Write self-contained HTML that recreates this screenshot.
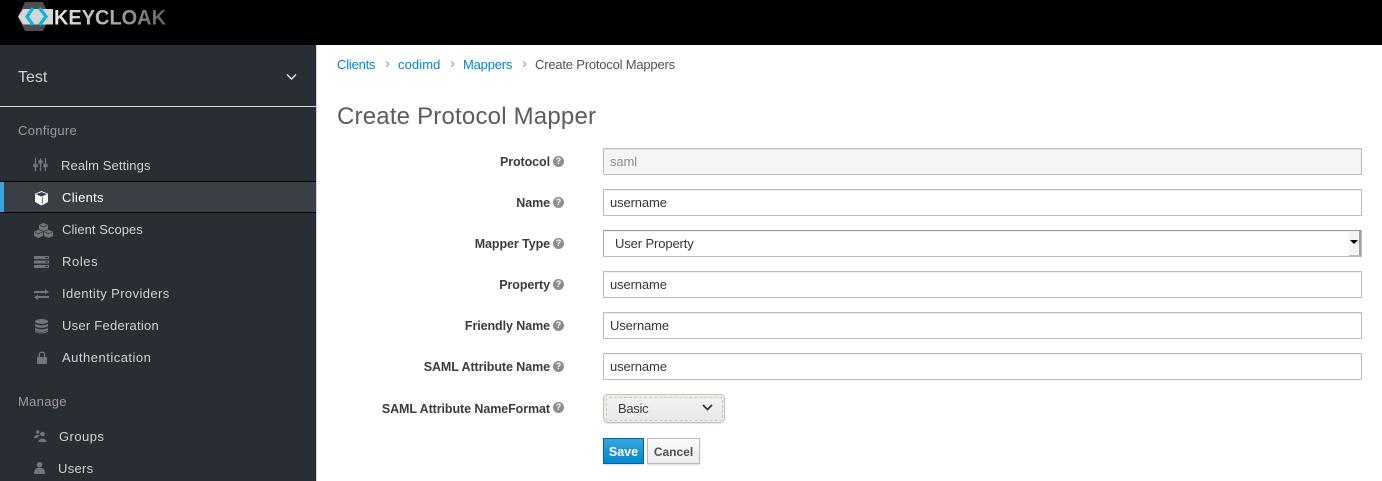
<!DOCTYPE html>
<html><head><meta charset="utf-8"><style>
html,body{margin:0;padding:0;width:1382px;height:481px;overflow:hidden;background:#fff;font-family:"Liberation Sans",sans-serif;font-size:13px;color:#363636}
.a{position:absolute;white-space:nowrap;line-height:18px}
#hd{position:absolute;left:0;top:0;width:1382px;height:45px;background:#000}
#sb{position:absolute;left:0;top:45px;width:316px;height:436px;background:#292e34;border-right:1px solid #d1d1d1}
.n{color:#d1d1d1}
.s{color:#9c9c9c;letter-spacing:.3px}
.l{right:832px;font-weight:bold;font-size:12.5px;color:#3c3c3c;letter-spacing:-.08px;text-align:right}
.q{position:absolute;left:553px;width:11px;height:11px;border-radius:50%;background:#8b8d8f;color:#fff;font:bold 9px/11px "Liberation Sans",sans-serif;text-align:center}
.i{position:absolute;left:603px;width:757px;height:25px;border:1px solid #bbb;background:#fff;line-height:25px;text-indent:6px;letter-spacing:-.12px;color:#363636;border-radius:1px;box-shadow:inset 0 1px 1px rgba(3,3,3,.06)}
.b{color:#0088ce;letter-spacing:-.2px}
.c{color:#9c9c9c;font-size:15px}
svg{position:absolute;overflow:visible}
</style></head><body>
<div id="hd"></div>
<svg style="left:0;top:0" width="180" height="45">
<defs><linearGradient id="g" x1="0" x2="1" y1="0" y2="0"><stop offset="0" stop-color="#e8e8e8"/><stop offset=".45" stop-color="#b5b5b5"/><stop offset="1" stop-color="#5f5f5f"/></linearGradient></defs>
<polygon points="25,31 43,31 50,17 43,2 25,2 18,17" fill="#4d4d4d"/>
<polygon points="18,16.5 23,9 53,9 53,24.5 23,24.5" fill="#d6d6d6"/>
<path d="M33,8 L27,16.5 L33,25 M39.5,8 L46,16.5 L39.5,25" fill="none" stroke="#00b8e3" stroke-width="3.2"/>
<text x="54" y="24.5" font-family="Liberation Sans" font-weight="bold" font-size="21" fill="url(#g)" textLength="112" lengthAdjust="spacingAndGlyphs">KEYCLOAK</text>
</svg>
<div id="sb"></div>
<div class="a" style="left:18px;top:68px;font-size:16px;line-height:20px;color:#d1d1d1;letter-spacing:0">Test</div>
<svg style="left:286px;top:73px" width="11" height="8"><path d="M1,1.5 L5.5,6 L10,1.5" fill="none" stroke="#e8e8e8" stroke-width="1.4"/></svg>
<div style="position:absolute;left:0;top:106px;width:316px;height:1px;background:#d8d8d8"></div>
<div class="a s" style="left:18px;top:122px">Configure</div>
<div class="a n" style="left:61px;top:157px;letter-spacing:.1px">Realm Settings</div>
<div style="position:absolute;left:0;top:181px;width:316px;height:32px;box-sizing:border-box;background:#393f44;border-top:1px solid #030303;border-bottom:1px solid #030303"></div>
<div style="position:absolute;left:0;top:182px;width:4px;height:30px;background:#39a5dc"></div>
<div class="a" style="left:62px;top:189px;color:#fff;letter-spacing:.3px">Clients</div>
<div class="a n" style="left:62px;top:221px;letter-spacing:.05px">Client Scopes</div>
<div class="a n" style="left:62px;top:253px;letter-spacing:.6px">Roles</div>
<div class="a n" style="left:62px;top:285px;letter-spacing:.4px">Identity Providers</div>
<div class="a n" style="left:62px;top:317px;letter-spacing:.25px">User Federation</div>
<div class="a n" style="left:62px;top:349px;letter-spacing:.5px">Authentication</div>
<div class="a s" style="left:18px;top:393px">Manage</div>
<div class="a n" style="left:59px;top:428px;letter-spacing:.45px">Groups</div>
<div class="a n" style="left:58px;top:460px;letter-spacing:.3px">Users</div>
<!-- sidebar icons -->
<svg style="left:34px;top:158px" width="14" height="14"><g stroke="#72767b" fill="#72767b" stroke-width="1.3"><path d="M1.5,0V13M6.5,0V13M11.5,0V13" fill="none"/><rect x="0" y="6.5" width="3" height="2"/><rect x="5" y="3" width="3" height="2"/><rect x="10" y="6.5" width="3" height="2"/></g></svg>
<svg style="left:34px;top:191px" width="15" height="15"><path d="M7.5,0 L14,2.8 V11 L7.5,14.5 L1,11 V2.8 Z" fill="#fff"/><path d="M3,3.2 L7.5,1.5 L12,3.2 L7.5,5.2 Z M8.3,6.2 V12.4" fill="#393f44" stroke="#393f44" stroke-width=".8"/></svg>
<svg style="left:34px;top:223px" width="19" height="15" fill="#72767b"><path d="M9.5,0 L14,2 V6.2 L9.5,8 L5,6.2 V2 Z"/><path d="M4.5,6.8 L9,8.8 V13 L4.5,15 L0,13 V8.8 Z"/><path d="M14.5,6.8 L19,8.8 V13 L14.5,15 L10,13 V8.8 Z"/><path d="M5.8,2.4 L9.5,4 L13.2,2.4 M1,9.2 L4.5,10.8 L8,9.2 M11,9.2 L14.5,10.8 L18,9.2" fill="none" stroke="#292e34" stroke-width=".7"/></svg>
<svg style="left:34px;top:256px" width="15" height="12" fill="#72767b"><rect width="15" height="3"/><rect y="4.5" width="15" height="3"/><rect y="9" width="15" height="3"/><g fill="#292e34"><rect x="11" y="1" width="3" height="1"/><rect x="11" y="5.5" width="3" height="1"/><rect x="11" y="10" width="3" height="1"/></g></svg>
<svg style="left:34px;top:289px" width="15" height="11" fill="#72767b"><path d="M0,2 H11 V0 L15,3 L11,5 V4 H0 Z"/><path d="M15,7 H4 V5.5 L0,8.5 L4,11 V9 H15 Z"/></svg>
<svg style="left:35px;top:319px" width="13" height="15" fill="#72767b"><ellipse cx="6.5" cy="2.5" rx="6.5" ry="2.5"/><path d="M0,4.5 C2,7 11,7 13,4.5 V7 C11,9.5 2,9.5 0,7 Z"/><path d="M0,8.5 C2,11 11,11 13,8.5 V11 C11,13.5 2,13.5 0,11 Z"/><path d="M0,11.5 C2,14 11,14 13,11.5 V12.5 C11,15 2,15 0,12.5 Z"/></svg>
<svg style="left:37px;top:351px" width="10" height="13"><path d="M2.3,6 V3.5 C2.3,0.4 7.7,0.4 7.7,3.5 V6" fill="none" stroke="#72767b" stroke-width="1.3"/><rect y="6" width="10" height="7" rx=".8" fill="#72767b"/></svg>
<svg style="left:34px;top:430px" width="13" height="12" fill="#72767b"><circle cx="8.5" cy="4" r="2.3"/><path d="M4.5,12 C4.5,7.5 12.5,7.5 12.5,12 Z"/><circle cx="3.8" cy="2" r="1.7"/><path d="M0,8 C0,4.5 5,4 6,5.5 C4.5,6 3.5,7 3.2,8 Z"/></svg>
<svg style="left:34px;top:462px" width="12" height="12" fill="#72767b"><circle cx="5.5" cy="2.8" r="2.8"/><path d="M0,12 C0,10 .5,6.5 3,6 H8 C10.5,6.5 11,10 11,12 Z"/></svg>
<!-- breadcrumb -->
<div class="a b" style="left:337px;top:56px">Clients</div>
<div class="a c" style="left:385px;top:55px">›</div>
<div class="a b" style="left:398px;top:56px;letter-spacing:.1px">codimd</div>
<div class="a c" style="left:450px;top:55px">›</div>
<div class="a b" style="left:463px;top:56px">Mappers</div>
<div class="a c" style="left:522px;top:55px">›</div>
<div class="a" style="left:535px;top:56px;color:#4d5258;letter-spacing:-.2px">Create Protocol Mappers</div>
<div class="a" style="left:337px;top:102px;font-size:24px;line-height:30px;color:#5c5c5c;letter-spacing:.2px">Create Protocol Mapper</div>
<!-- labels -->
<div class="a l" style="top:153px">Protocol</div><div class="q" style="top:156px">?</div>
<div class="a l" style="top:194px">Name</div><div class="q" style="top:197px">?</div>
<div class="a l" style="top:235px">Mapper Type</div><div class="q" style="top:238px">?</div>
<div class="a l" style="top:276px">Property</div><div class="q" style="top:279px">?</div>
<div class="a l" style="top:317px">Friendly Name</div><div class="q" style="top:320px">?</div>
<div class="a l" style="top:358px">SAML Attribute Name</div><div class="q" style="top:361px">?</div>
<div class="a l" style="top:400px">SAML Attribute NameFormat</div><div class="q" style="top:402px">?</div>
<!-- inputs -->
<div class="i" style="top:148px;background:#f5f5f5;color:#8b8d8f">saml</div>
<div class="i" style="top:189px">username</div>
<div class="i" style="top:230px;text-indent:11px;border-top-color:#999;border-left-color:#aaa">User Property</div>
<div style="position:absolute;left:1349px;top:231px;width:10px;height:24px;background:#f4f4f4;border-right:2px solid #a0a0a0;border-bottom:1px solid #bdbdbd"></div>
<svg style="left:1350px;top:240px" width="9" height="5"><path d="M0,0 H8 L4,4 Z" fill="#000"/></svg>
<div class="i" style="top:271px">username</div>
<div class="i" style="top:312px">Username</div>
<div class="i" style="top:353px">username</div>
<!-- basic select -->
<div style="position:absolute;left:603px;top:394px;width:120px;height:27px;border:1px solid #c4c0b8;border-radius:5px;background:#efedea;box-shadow:0 1px 1px rgba(0,0,0,.1)"></div>
<div style="position:absolute;left:606px;top:397px;width:115px;height:22px;border:1px dashed #c8c8c6;border-radius:3px;background:linear-gradient(#f3f2f0,#ebe9e6)"></div>
<div class="a" style="left:618px;top:400px;letter-spacing:-.3px;color:#3c3c3c">Basic</div>
<svg style="left:702px;top:404px" width="11" height="8"><path d="M1,1 L5.5,5.5 L10,1" fill="none" stroke="#333" stroke-width="1.8"/></svg>
<!-- buttons -->
<div class="a" style="left:603px;top:438px;width:39px;height:24px;line-height:26px;text-align:center;border:1px solid #00659c;background:linear-gradient(#39a5dc,#0088ce);color:#fff;font-weight:bold;font-size:12.5px;box-shadow:0 1px 1px rgba(0,0,0,.15)">Save</div>
<div class="a" style="left:647px;top:438px;width:51px;height:24px;line-height:26px;text-align:center;border:1px solid #bbb;background:linear-gradient(#fafafa,#ededed);color:#4d5258;font-weight:bold;font-size:12px;box-shadow:0 1px 1px rgba(0,0,0,.15)">Cancel</div>
</body></html>
